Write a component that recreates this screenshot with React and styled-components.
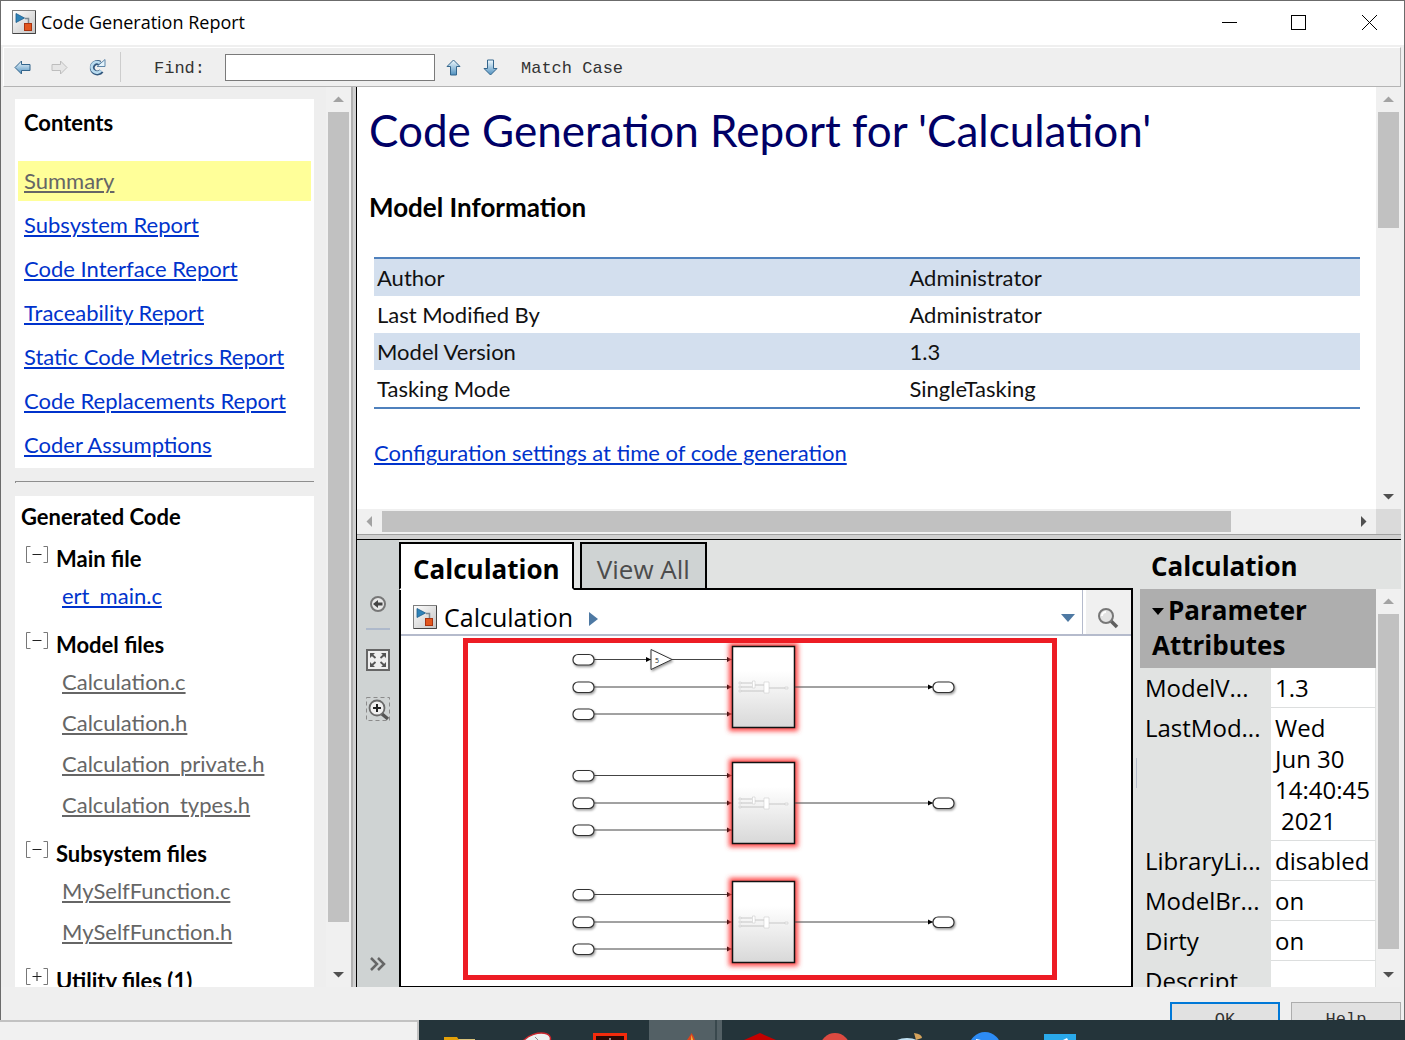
import React, { useState } from 'react';
import styled, { createGlobalStyle } from 'styled-components';

const GlobalStyle = createGlobalStyle`
  * {
    box-sizing: border-box;
  }

  body {
    margin: 0;
    overflow: hidden;
    background: #efefef;
  }

  button {
    margin: 0;
    padding: 0;
    border: 0;
    background: none;
    color: inherit;
    font: inherit;
  }
`

const docFont = `Lato, "Liberation Sans", sans-serif`;
const uiFont = `"Open Sans", "Noto Sans", sans-serif`;
const monoFont = `"Liberation Mono", monospace`;

const Screen = styled.div`
  display: flex;
  flex-direction: column;
  height: 100vh;
`

const Window = styled.div`
  display: flex;
  flex: 1;
  flex-direction: column;
  min-height: 0;
  overflow: hidden;
  background: #efefef;
  border: solid #6b6b6b;
  border-width: 1px 1px 0;
`

// ---------------- title bar ----------------

const TitleBar = styled.header`
  display: flex;
  flex: none;
  align-items: center;
  height: 44px;
  padding: 0 12px 2px 11px;
  background: white;
  font-family: ${uiFont};
`

const WindowTitle = styled.span`
  flex: 1;
  margin-left: 5px;
  font-size: 18px;
`

const WindowButtons = styled.div`
  display: flex;
  gap: 24px;
`

const WindowButton = styled.button`
  display: flex;
  align-items: center;
  justify-content: center;
  width: 46px;
  height: 30px;
`

// ---------------- tool bar ----------------

const ToolBar = styled.div`
  display: flex;
  flex: none;
  align-items: center;
  height: 40px;
  margin: 2px 3px 0 2px;
  border: 1px solid #b4b4b4;
  border-top-color: white;
  border-left-color: white;
  font-family: ${monoFont};
  font-size: 17px;
  color: #333;
`

const ToolButton = styled.button`
  display: flex;
  align-items: center;
  justify-content: center;
  width: 37px;
  height: 30px;
`

const Divider = styled.div`
  width: 1px;
  height: 30px;
  margin: 0 33px 0 5px;
  background: #cdcdcd;
`

const FindLabel = styled.label`
  margin-right: 20px;
  padding-top: 2px;
`

const FindInput = styled.input`
  width: 210px;
  height: 27px;
  background: white;
  border: 1px solid #7a7a7a;
  border-radius: 0;
`

const MatchButton = styled.button`
  margin-left: 12px;
  padding-top: 2px;
`

// ---------------- scroll bars ----------------

const ScrollTrack = styled.div`
  display: flex;
  flex: none;
  flex-direction: ${props => props.$horizontal ? 'row' : 'column'};
  ${props => props.$horizontal ? 'height: 25px;' : 'width: 25px;'}
  background: #f0f0f0;
`

const ScrollButton = styled.button`
  display: flex;
  flex: none;
  align-items: center;
  justify-content: center;
  width: 25px;
  height: 25px;
`

const ScrollThumb = styled.div`
  flex: ${props => props.$size} 0 0;
  margin: ${props => props.$horizontal ? '2px 0' : '0 2px'};
  background: #c1c1c1;
`

const ScrollRest = styled.div`
  flex: ${props => props.$size} 0 0;
`

const Chevron = ({ turn, color }) => (
  <svg width="11" height="11" viewBox="0 0 11 11" aria-hidden="true">
    <path d="M0 8L5.500 2.500L11 8Z" fill={color} transform={`rotate(${turn} 5.500 5.500)`} />
  </svg>
)

// size is the thumb's share of the track, per mille
const ScrollBar = ({ horizontal, size }) => (
  <ScrollTrack $horizontal={horizontal}>
    <ScrollButton aria-label="Scroll back">
      <Chevron turn={horizontal ? -90 : 0} color="#a3a3a3" />
    </ScrollButton>
    <ScrollThumb $horizontal={horizontal} $size={size} />
    <ScrollRest $size={1000 - size} />
    <ScrollButton aria-label="Scroll forward">
      <Chevron turn={horizontal ? 90 : 180} color="#505050" />
    </ScrollButton>
  </ScrollTrack>
)

// ---------------- side bar ----------------

const Body = styled.div`
  display: flex;
  flex: 1;
  min-height: 0;
  margin-right: 3px;
`

const SideBar = styled.aside`
  display: flex;
  flex: none;
  width: 350px;
  overflow: hidden;
  background: #eee;
  font-family: ${docFont};
  font-size: 22px;
`

const SideContent = styled.div`
  flex: 1;
  min-width: 0;
  padding: 12px 12px 0 14px;
`

const Splitter = styled.div`
  flex: none;
  width: 6px;
  background: #d0d0d0;
  border-left: 2px solid #b0b0b0;
  border-right: 1px solid black;
`

const ContentsPanel = styled.nav`
  padding: 4px 3px 3px;
  background: white;
`

const PanelTitle = styled.h2`
  margin: 0;
  padding-left: 6px;
  line-height: 40px;
  font-size: 22px;
`

const ContentsList = styled.ul`
  display: flex;
  flex-direction: column;
  gap: 4px;
  margin: 18px 0 0;
  padding: 0;
  list-style: none;
`

const ContentsItem = styled.li`
  padding: 0 6px;
  line-height: 40px;
  background: ${props => props.$current ? '#ffff99' : 'none'};
`

const DocLink = styled.a`
  color: ${props => props.$visited ? '#666' : '#0033cc'};
  text-decoration-thickness: 2px;
  text-underline-offset: 2px;
  white-space: nowrap;
`

const Rule = styled.hr`
  height: 2px;
  margin: 13px 0 13px;
  border: 0;
  border-top: 1px solid #8e8e8e;
  border-left: 1px solid #8e8e8e;
`

const CodePanel = styled.section`
  padding: 0 6px 60px;
  background: white;
`

const CodeTitle = styled.h2`
  margin: 0;
  line-height: 42px;
  font-size: 22px;
`

const FileGroup = styled.div`
  padding-bottom: 8px;
`

const GroupHead = styled.div`
  display: flex;
  align-items: flex-start;
  height: 37px;
  line-height: 41px;
`

const ToggleButton = styled.button`
  flex: none;
  width: 35px;
  padding-left: 4px;
  line-height: 0;
  padding-top: 8px;
  text-align: left;
`

const GroupTitle = styled.h3`
  margin: 0;
  font-size: 22px;
`

const FileList = styled.ul`
  margin: 0;
  padding: 0 0 0 41px;
  list-style: none;
  line-height: 41px;
`

// ---------------- report ----------------

const Main = styled.main`
  display: flex;
  flex: 1;
  flex-direction: column;
  min-width: 0;
`

const ReportPane = styled.section`
  display: grid;
  flex: 447 0 0;
  grid-template-columns: 1fr 25px;
  grid-template-rows: 1fr 25px;
  min-height: 0;
  background: white;
`

const Report = styled.article`
  overflow: hidden;
  padding: 12px 16px 0 12px;
  font-family: ${docFont};
  font-size: 22px;
  color: #111;
`

const ReportTitle = styled.h1`
  margin: 0;
  font-size: 44px;
  font-weight: 400;
  line-height: 62px;
  color: #000066;
  white-space: nowrap;
`

const ReportHeading = styled.h2`
  margin: 30px 0 33px;
  font-size: 26px;
  line-height: 33px;
  color: black;
`

const InfoTable = styled.table`
  width: calc(100% - 5px);
  margin: 0 0 24px 5px;
  border-collapse: separate;
  border-spacing: 0;
  border-top: 2px solid #4f81bd;
  border-bottom: 2px solid #4f81bd;

  td {
    height: 37px;
    padding: 0 3px;
    line-height: 37px;
  }

  td:first-child {
    width: 54%;
  }

  tr:nth-child(odd) {
    background: #d3dfee;
  }
`

const ReportLinkLine = styled.p`
  margin: 0 0 0 5px;
  line-height: 40px;
`

const ScrollCorner = styled.div`
  background: #dadada;
`

const PaneSplitter = styled.div`
  flex: none;
  height: 6px;
  background: #d0d0d0;
  border-top: 1px solid #a0a0a0;
  border-bottom: 1px solid black;
`

// ---------------- model viewer ----------------

const ModelPane = styled.section`
  display: flex;
  flex: 447 0 0;
  min-height: 0;
  overflow: hidden;
  background: #e1e3e2;
  font-family: ${uiFont};
  font-size: 24px;
`

const Palette = styled.div`
  display: flex;
  flex: none;
  flex-direction: column;
  align-items: center;
  width: 42px;
  padding: 51px 0 10px;
  background: #cfd3d3;
`

const PaletteButton = styled.button`
  display: flex;
  align-items: center;
  justify-content: center;
  width: 26px;
  height: 26px;
`

const PaletteLine = styled.div`
  width: 24px;
  height: 2px;
  margin: 11px 0 17px;
  background: #aeb9cb;
`

const PaletteGroup = styled.div`
  display: flex;
  flex: 1;
  flex-direction: column;
  gap: 23px;
`

const Viewer = styled.div`
  display: flex;
  flex: 1;
  flex-direction: column;
  min-width: 0;
`

const Tabs = styled.div`
  display: flex;
  flex: none;
  height: 50px;
  padding-top: 2px;
`

const Tab = styled.button`
  padding: ${props => props.$active ? '5px 12px 0' : '5px 15px 0'};
  border: 2px solid black;
  border-bottom-color: ${props => props.$active ? 'white' : 'black'};
  background: ${props => props.$active ? 'white' : '#cfd3d3'};
  color: ${props => props.$active ? 'black' : '#4c4c4c'};
  font-size: 26px;
  font-weight: ${props => props.$active ? 700 : 400};
  line-height: 36px;
  white-space: nowrap;
`

const TabSpace = styled.div`
  flex: ${props => props.$grow ? '1' : '0 0 6px'};
  border-bottom: 2px solid black;
`

const ViewerBody = styled.div`
  display: flex;
  flex: 1;
  flex-direction: column;
  min-height: 0;
  background: white;
  border: solid black;
  border-width: 0 2px 1px;
`

const PathBar = styled.div`
  display: flex;
  flex: none;
  align-items: center;
  height: 46px;
  padding-left: 12px;
  border-bottom: 2px solid #b5bbcc;
`

const PathButton = styled.button`
  display: flex;
  align-items: center;
  gap: 7px;
  padding-top: 10px;
  font-size: 25px;
`

const PathArrow = styled.div`
  display: flex;
  flex: 1;
  padding: 13px 0 0 16px;
`

const PathMenuButton = styled.button`
  padding: 11px 7px 0 0;
  line-height: 0;
`

const SearchButton = styled.button`
  display: flex;
  align-items: center;
  justify-content: center;
  width: 49px;
  height: 44px;
  padding: 12px 0 0 2px;
  background: #f0f0f0;
  border-left: 1px solid #b5bbcc;
  box-shadow: inset 3px 0 white;
`

const Canvas = styled.div`
  flex: 1;
  min-height: 0;
  margin: 2px 74px 6px 62px;
  border: 5px solid #ed1c24;

  svg {
    display: block;
    width: 100%;
    height: 100%;
  }
`

// ---------------- properties ----------------

const Properties = styled.aside`
  display: flex;
  flex: none;
  flex-direction: column;
  width: 268px;
`

const PropertiesTitle = styled.h2`
  flex: none;
  height: 49px;
  margin: 0;
  padding: 2px 0 0 18px;
  font-size: 26px;
  line-height: 48px;
`

const PropertiesBody = styled.div`
  display: flex;
  flex: 1;
  min-height: 0;
`

const Grip = styled.div`
  flex: none;
  align-self: flex-start;
  width: 4px;
  height: 30px;
  margin: 169px 0 0 3px;
  border-left: 1px solid #b9bfcc;
`

const PropertiesList = styled.div`
  flex: 1;
  min-width: 0;
  overflow: hidden;
`

const SectionButton = styled.button`
  display: block;
  width: 100%;
  padding: 4px 12px 5px;
  background: #aeaeae;
  text-align: left;
  font-size: 26px;
  font-weight: 700;
  line-height: 35px;

  svg {
    margin: 0 4px 5px 0;
    vertical-align: baseline;
  }
`

const PropertyTable = styled.table`
  width: 100%;
  table-layout: fixed;
  border-spacing: 0;
  line-height: 31px;

  th {
    width: 131px;
    padding: 4px 0 5px 5px;
    font-weight: 400;
    text-align: left;
    vertical-align: top;
    white-space: nowrap;
  }

  td {
    height: 40px;
    padding: 4px 0 4px 4px;
    background: white;
    border-right: 1px solid #e1e3e2;
    border-bottom: 1px solid #dcdede;
    white-space: pre-line;
  }
`

const Indent = styled.span`
  padding-left: 6px;
`

// ---------------- footer ----------------

const Footer = styled.footer`
  display: flex;
  flex: none;
  justify-content: flex-end;
  gap: 11px;
  height: 33px;
  padding: 15px 3px 0;
  overflow: hidden;
`

const DialogButton = styled.button`
  width: 110px;
  height: 34px;
  background: #e1e1e1;
  border: ${props => props.$primary ? '2px solid #0078d7' : '1px solid #adadad'};
  font-family: ${monoFont};
  font-size: 17px;
  color: #333;
`

const TaskBar = styled.div`
  display: flex;
  flex: none;
  height: 20px;
  overflow: hidden;
  background: #24343a;
`

const TaskPanel = styled.div`
  width: 419px;
  margin-right: 3px;
  background: #f1f1f1;
  border-top: 2px solid #c2c2c2;
  border-right: 2px solid #c2c2c2;
`

const TaskButton = styled.button`
  display: flex;
  align-items: flex-start;
  justify-content: center;
  width: 75px;
  height: 20px;
  ${props => props.$active && `
    background: linear-gradient(90deg, #24343a 2px, #536065 2px, #536065 68px, #39484d 68px, #39484d 70px, #536065 70px);
  `}
`

// ---------------- drawings ----------------

const ModelIcon = () => (
  <svg width="24" height="24" viewBox="0 0 24 24" aria-hidden="true">
    <defs>
      <linearGradient id="modelFace" x1="0" y1="0" x2="1" y2="1">
        <stop offset="0" stopColor="#fff" />
        <stop offset="1" stopColor="#c3c3c3" />
      </linearGradient>
    </defs>
    <rect x="0.5" y="0.5" width="23" height="23" fill="url(#modelFace)" stroke="#7f7f7f" />
    <path d="M1 23.500H23.500V1" fill="none" stroke="#444" />
    <path d="M13 8.500H16.500V13" fill="none" stroke="#7c8992" strokeWidth="1.500" />
    <path d="M4 3.500L12.500 8L4 12.500Z" fill="#2f83b8" stroke="#1d5d8b" strokeWidth="0.800" />
    <rect x="12.500" y="13.500" width="7" height="7" fill="#e2561e" stroke="#a93310" />
  </svg>
)

const ArrowIcon = ({ turn, off }) => (
  <svg width="17" height="17" viewBox="0 0 17 17" aria-hidden="true">
    <defs>
      <linearGradient id={`arrowFace${turn}`} gradientTransform={`rotate(${90 - turn} 0.5 0.5)`}>
        <stop offset="0" stopColor="#f2fbff" />
        <stop offset="1" stopColor="#4f90bf" />
      </linearGradient>
    </defs>
    <path
      d="M1 8.500L7.500 2V5.500H16V11.500H7.500V15Z"
      fill={off ? '#e6e6e6' : `url(#arrowFace${turn})`}
      stroke={off ? '#bdbdbd' : '#33658c'}
      transform={`rotate(${turn} 8.500 8.500)`}
    />
  </svg>
)

const RefreshIcon = () => (
  <svg width="18" height="18" viewBox="0 0 18 18" aria-hidden="true">
    <path d="M12 5.200A5.200 5.200 0 1 0 13.500 13" fill="none" stroke="#33587e" strokeWidth="5" />
    <path d="M12 5.200A5.200 5.200 0 1 0 13 12.500" fill="none" stroke="#b9dcf0" strokeWidth="2.800" />
    <path d="M9 8.500H17V1.500Z" fill="#e4f3fb" stroke="#5f86a8" />
  </svg>
)

const BackIcon = () => (
  <svg width="16" height="16" viewBox="0 0 16 16" aria-hidden="true">
    <circle cx="8" cy="8" r="7" fill="#e8e8e8" stroke="#777" strokeWidth="2" />
    <path d="M3 8L8 4V6.500H12.500V9.500H8V12Z" fill="#444" />
  </svg>
)

const FitIcon = () => (
  <svg width="24" height="22" viewBox="0 0 24 22" aria-hidden="true">
    <rect x="1" y="1" width="22" height="20" fill="#eee" stroke="#666" strokeWidth="2" />
    <path
      d="M4 4H9L4 9ZM20 4V9L15 4ZM4 18V13L9 18ZM20 18H15L20 13Z"
      fill="#555"
    />
    <path d="M5 5L9.500 9M19 5L14.500 9M5 17L9.500 13M19 17L14.500 13" stroke="#555" strokeWidth="1.800" />
  </svg>
)

const ZoomIcon = () => (
  <svg width="24" height="24" viewBox="0 0 24 24" aria-hidden="true">
    <rect x="0.5" y="0.5" width="23" height="23" fill="none" stroke="#8b8b8b" strokeDasharray="4 3" />
    <path d="M16 17L22 22" stroke="#555" strokeWidth="3.500" />
    <circle cx="11" cy="11" r="7.500" fill="#f0f0f0" stroke="#6b6b6b" strokeWidth="1.800" />
    <path d="M7 11H15M11 7V15" stroke="#222" strokeWidth="2" />
  </svg>
)

const SearchIcon = () => (
  <svg width="22" height="22" viewBox="0 0 22 22" aria-hidden="true">
    <path d="M14 14L20 20" stroke="#5f5f5f" strokeWidth="3.500" />
    <circle cx="9" cy="9" r="7" fill="#e3e3e3" stroke="#777" strokeWidth="2" />
    <path d="M5 9A4 4 0 0 1 9 5" fill="none" stroke="white" strokeWidth="2" />
  </svg>
)

const ToggleMark = ({ open }) => (
  <svg width="24" height="18" viewBox="0 0 24 18" aria-hidden="true">
    <path d="M5.500 0.500H1.500V16.500H5.500M18.500 0.500H22.500V16.500H18.500" fill="none" stroke="#777" />
    <path d={open ? 'M7.500 8.500H16.500' : 'M7.500 8.500H16.500M12 4V13'} stroke="#222" />
  </svg>
)

const Port = ({ x, y }) => (
  <rect x={x} y={y - 5.5} width="21" height="10.500" rx="5" fill="white" stroke="#333" strokeWidth="1.200" filter="url(#portShadow)" />
)

const Wire = ({ from, to, y }) => (
  <g>
    <path d={`M${from} ${y}H${to}`} stroke="#444" strokeWidth="1" />
    <path d={`M${to - 5} ${y - 2.5}L${to} ${y}L${to - 5} ${y + 2.5}Z`} fill="black" />
  </g>
)

const Subsystem = ({ top, gain }) => {
  const rows = [top + 13.5, top + 41, top + 68];
  return (
    <g>
      {rows.map(y => <Port key={y} x={573} y={y + 0.5} />)}
      {gain && <Wire from={594} to={651} y={rows[0]} />}
      <Wire from={gain ? 672 : 594} to={732} y={rows[0]} />
      <Wire from={594} to={732} y={rows[1]} />
      <Wire from={594} to={732} y={rows[2]} />
      {gain && (
        <g>
          <path d={`M651 ${rows[0] - 10}V${rows[0] + 10}L672 ${rows[0]}Z`} fill="white" stroke="#333" filter="url(#portShadow)" />
          <text x="655" y={rows[0] + 3} fontSize="7" fill="#222">{gain}</text>
        </g>
      )}
      <rect x="729" y={top - 3} width="69" height="88" fill="#f44" filter="url(#glow)" />
      <rect x="732.500" y={top + 0.5} width="62" height="81" fill="url(#blockFace)" stroke="#111" strokeWidth="1.500" />
      <g fill="none" stroke="#c4c4c4" strokeWidth="0.500">
        <path d={`M741 ${top + 37}H752M741 ${top + 41}H752M741 ${top + 45}H764M755 ${top + 39}H764M769 ${top + 42}H785`} stroke="#999" />
        <path d={`M752.500 ${top + 35}H755V${top + 42}H752.500ZM764 ${top + 36}H769V${top + 47}H764Z`} fill="white" />
        <path d={`M739 ${top + 36}H741V${top + 38}H739ZM739 ${top + 40}H741V${top + 42}H739ZM739 ${top + 44}H741V${top + 46}H739ZM785 ${top + 41}H788V${top + 43}H785Z`} />
      </g>
      <Wire from={795} to={933} y={rows[1]} />
      <Port x={933} y={rows[1] + 0.5} />
    </g>
  )
}

const ModelDiagram = () => (
  <svg viewBox="468 643 584 332" role="img" aria-label="Calculation model">
    <defs>
      <linearGradient id="blockFace" x1="0" y1="0" x2="0" y2="1">
        <stop offset="0.3" stopColor="#fff" />
        <stop offset="1" stopColor="#d8d8d8" />
      </linearGradient>
      <filter id="glow" x="-20%" y="-20%" width="140%" height="140%">
        <feGaussianBlur stdDeviation="2.500" />
      </filter>
      <filter id="portShadow" x="-20%" y="-30%" width="150%" height="180%">
        <feDropShadow dx="1" dy="1.500" stdDeviation="0.800" floodOpacity="0.400" />
      </filter>
    </defs>
    <Subsystem top={646} gain="5" />
    <Subsystem top={762} />
    <Subsystem top={881} />
  </svg>
)

const taskIcons = [
  { name: 'Files', art: <><path d="M18 19H35V20H18Z" fill="#d9c27a" /><path d="M4 17H17L19 20H4Z" fill="#e3a008" /></> },
  { name: 'Notes', art: <><ellipse cx="21" cy="22" rx="15" ry="8" fill="#eef0f0" stroke="#c9252c" strokeWidth="1.500" transform="rotate(-18 21 22)" /><path d="M20 17L23 20" stroke="#888" /></> },
  { name: 'Reader', art: <><path d="M4.500 20V14.500H35.500V20" fill="#2b0a06" stroke="#f52b0c" strokeWidth="3" /><path d="M20 18V20" stroke="white" /></> },
  { name: 'Simulation', active: true, art: <><path d="M22 20Q25 16 26.500 13Q29 16 30 20Z" fill="#d9441e" /><path d="M26 20L26.500 15L28 20Z" fill="#f3c33b" /></> },
  { name: 'Editor', art: <path d="M4 20L20 13L36 20Z" fill="#c40000" /> },
  { name: 'Music', art: <circle cx="20" cy="28" r="15" fill="#dc4a41" /> },
  { name: 'Mail', art: <><ellipse cx="17" cy="26" rx="15" ry="8" fill="#bfe0f2" /><path d="M24 13Q32 14 32 18L26 20Z" fill="#d6a45c" /></> },
  { name: 'Meeting', art: <><circle cx="20" cy="28" r="16" fill="#2d8cf5" /><path d="M11 19L16 20H11Z" fill="white" /></> },
  { name: 'Desktop', art: <><path d="M4 14H36V20H4Z" fill="#2aa9ea" /><path d="M23 20L27 18L28 20Z" fill="white" /></> },
]

// ---------------- page ----------------

const contents = [
  'Summary',
  'Subsystem Report',
  'Code Interface Report',
  'Traceability Report',
  'Static Code Metrics Report',
  'Code Replacements Report',
  'Coder Assumptions',
]

const fileGroups = [
  { title: 'Main file', files: ['ert_main.c'] },
  { title: 'Model files', visited: true, files: ['Calculation.c', 'Calculation.h', 'Calculation_private.h', 'Calculation_types.h'] },
  { title: 'Subsystem files', visited: true, files: ['MySelfFunction.c', 'MySelfFunction.h'] },
  { title: 'Utility files (1)', closed: true, files: ['rtwtypes.h'] },
]

const modelInfo = [
  ['Author', 'Administrator'],
  ['Last Modified By', 'Administrator'],
  ['Model Version', '1.3'],
  ['Tasking Mode', 'SingleTasking'],
]

const properties = [
  ['ModelV...', '1.3'],
  ['LastMod...', <>{'Wed\nJun 30\n14:40:45\n'}<Indent>2021</Indent></>],
  ['LibraryLi...', 'disabled'],
  ['ModelBr...', 'on'],
  ['Dirty', 'on'],
  ['Descript', ''],
]

const CodeGroup = ({ group }) => {
  const [open, setOpen] = useState(!group.closed);
  return (
    <FileGroup>
      <GroupHead>
        <ToggleButton aria-label={group.title} aria-expanded={open} onClick={() => setOpen(!open)}>
          <ToggleMark open={open} />
        </ToggleButton>
        <GroupTitle>{group.title}</GroupTitle>
      </GroupHead>
      {open && (
        <FileList>
          {group.files.map(file => (
            <li key={file}><DocLink href="#" $visited={group.visited}>{file}</DocLink></li>
          ))}
        </FileList>
      )}
    </FileGroup>
  )
}

const App = () => {
  const [tab, setTab] = useState('Calculation');

  return (
    <Screen>
      <GlobalStyle />
      <Window>
        <TitleBar>
          <ModelIcon />
          <WindowTitle>Code Generation Report</WindowTitle>
          <WindowButtons>
            <WindowButton aria-label="Minimize">
              <svg width="15" height="15"><path d="M0 7.500H15" stroke="black" /></svg>
            </WindowButton>
            <WindowButton aria-label="Maximize">
              <svg width="16" height="15"><rect x="0.5" y="0.5" width="14" height="14" fill="none" stroke="black" /></svg>
            </WindowButton>
            <WindowButton aria-label="Close">
              <svg width="15" height="15"><path d="M0 0L15 15M15 0L0 15" stroke="black" /></svg>
            </WindowButton>
          </WindowButtons>
        </TitleBar>

        <ToolBar>
          <ToolButton aria-label="Back"><ArrowIcon turn={0} /></ToolButton>
          <ToolButton aria-label="Forward" disabled><ArrowIcon turn={180} off /></ToolButton>
          <ToolButton aria-label="Refresh"><RefreshIcon /></ToolButton>
          <Divider />
          <FindLabel htmlFor="find">Find:</FindLabel>
          <FindInput id="find" type="text" />
          <ToolButton aria-label="Find previous"><ArrowIcon turn={90} /></ToolButton>
          <ToolButton aria-label="Find next"><ArrowIcon turn={-90} /></ToolButton>
          <MatchButton>Match Case</MatchButton>
        </ToolBar>

        <Body>
          <SideBar>
            <SideContent>
              <ContentsPanel>
                <PanelTitle>Contents</PanelTitle>
                <ContentsList>
                  {contents.map((item, i) => (
                    <ContentsItem key={item} $current={i === 0}>
                      <DocLink href="#" $visited={i === 0}>{item}</DocLink>
                    </ContentsItem>
                  ))}
                </ContentsList>
              </ContentsPanel>
              <Rule />
              <CodePanel>
                <CodeTitle>Generated Code</CodeTitle>
                {fileGroups.map(group => <CodeGroup key={group.title} group={group} />)}
              </CodePanel>
            </SideContent>
            <ScrollBar size={953} />
          </SideBar>
          <Splitter />

          <Main>
            <ReportPane>
              <Report>
                <ReportTitle>Code Generation Report for 'Calculation'</ReportTitle>
                <ReportHeading>Model Information</ReportHeading>
                <InfoTable>
                  <tbody>
                    {modelInfo.map(([name, value]) => (
                      <tr key={name}>
                        <td>{name}</td>
                        <td>{value}</td>
                      </tr>
                    ))}
                  </tbody>
                </InfoTable>
                <ReportLinkLine>
                  <DocLink href="#">Configuration settings at time of code generation</DocLink>
                </ReportLinkLine>
              </Report>
              <ScrollBar size={312} />
              <ScrollBar horizontal size={876} />
              <ScrollCorner />
            </ReportPane>
            <PaneSplitter />

            <ModelPane>
              <Palette>
                <PaletteButton aria-label="Go back"><BackIcon /></PaletteButton>
                <PaletteLine />
                <PaletteGroup>
                  <PaletteButton aria-label="Fit to view"><FitIcon /></PaletteButton>
                  <PaletteButton aria-label="Zoom in"><ZoomIcon /></PaletteButton>
                </PaletteGroup>
                <PaletteButton aria-label="Expand">
                  <svg width="16" height="14" viewBox="0 0 16 14">
                    <path d="M1 1L7 7L1 13M8 1L14 7L8 13" fill="none" stroke="#666" strokeWidth="2.500" />
                  </svg>
                </PaletteButton>
              </Palette>

              <Viewer>
                <Tabs role="tablist">
                  <Tab role="tab" $active={tab === 'Calculation'} onClick={() => setTab('Calculation')}>Calculation</Tab>
                  <TabSpace />
                  <Tab role="tab" $active={tab === 'View All'} onClick={() => setTab('View All')}>View All</Tab>
                  <TabSpace $grow />
                </Tabs>
                <ViewerBody>
                  <PathBar>
                    <PathButton><ModelIcon />Calculation</PathButton>
                    <PathArrow>
                      <svg width="9" height="14"><path d="M0 0L9 7L0 14Z" fill="#4e79a3" /></svg>
                    </PathArrow>
                    <PathMenuButton aria-label="Recent models">
                      <svg width="14" height="8"><path d="M0 0H14L7 8Z" fill="#4e79a3" /></svg>
                    </PathMenuButton>
                    <SearchButton aria-label="Search"><SearchIcon /></SearchButton>
                  </PathBar>
                  <Canvas>
                    <ModelDiagram />
                  </Canvas>
                </ViewerBody>
              </Viewer>

              <Properties>
                <PropertiesTitle>Calculation</PropertiesTitle>
                <PropertiesBody>
                  <Grip />
                  <PropertiesList>
                    <SectionButton>
                      <svg width="12" height="7"><path d="M0 0H12L6 7Z" fill="black" /></svg>
                      Parameter Attributes
                    </SectionButton>
                    <PropertyTable>
                      <tbody>
                        {properties.map(([name, value]) => (
                          <tr key={name}>
                            <th scope="row">{name}</th>
                            <td>{value}</td>
                          </tr>
                        ))}
                      </tbody>
                    </PropertyTable>
                  </PropertiesList>
                  <ScrollBar size={963} />
                </PropertiesBody>
              </Properties>
            </ModelPane>
          </Main>
        </Body>

        <Footer>
          <DialogButton $primary>OK</DialogButton>
          <DialogButton>Help</DialogButton>
        </Footer>
      </Window>

      <TaskBar>
        <TaskPanel />
        {taskIcons.map(icon => (
          <TaskButton key={icon.name} aria-label={icon.name} $active={icon.active}>
            <svg width="40" height="20" viewBox="0 0 40 20">{icon.art}</svg>
          </TaskButton>
        ))}
      </TaskBar>
    </Screen>
  );
};

export default App;
